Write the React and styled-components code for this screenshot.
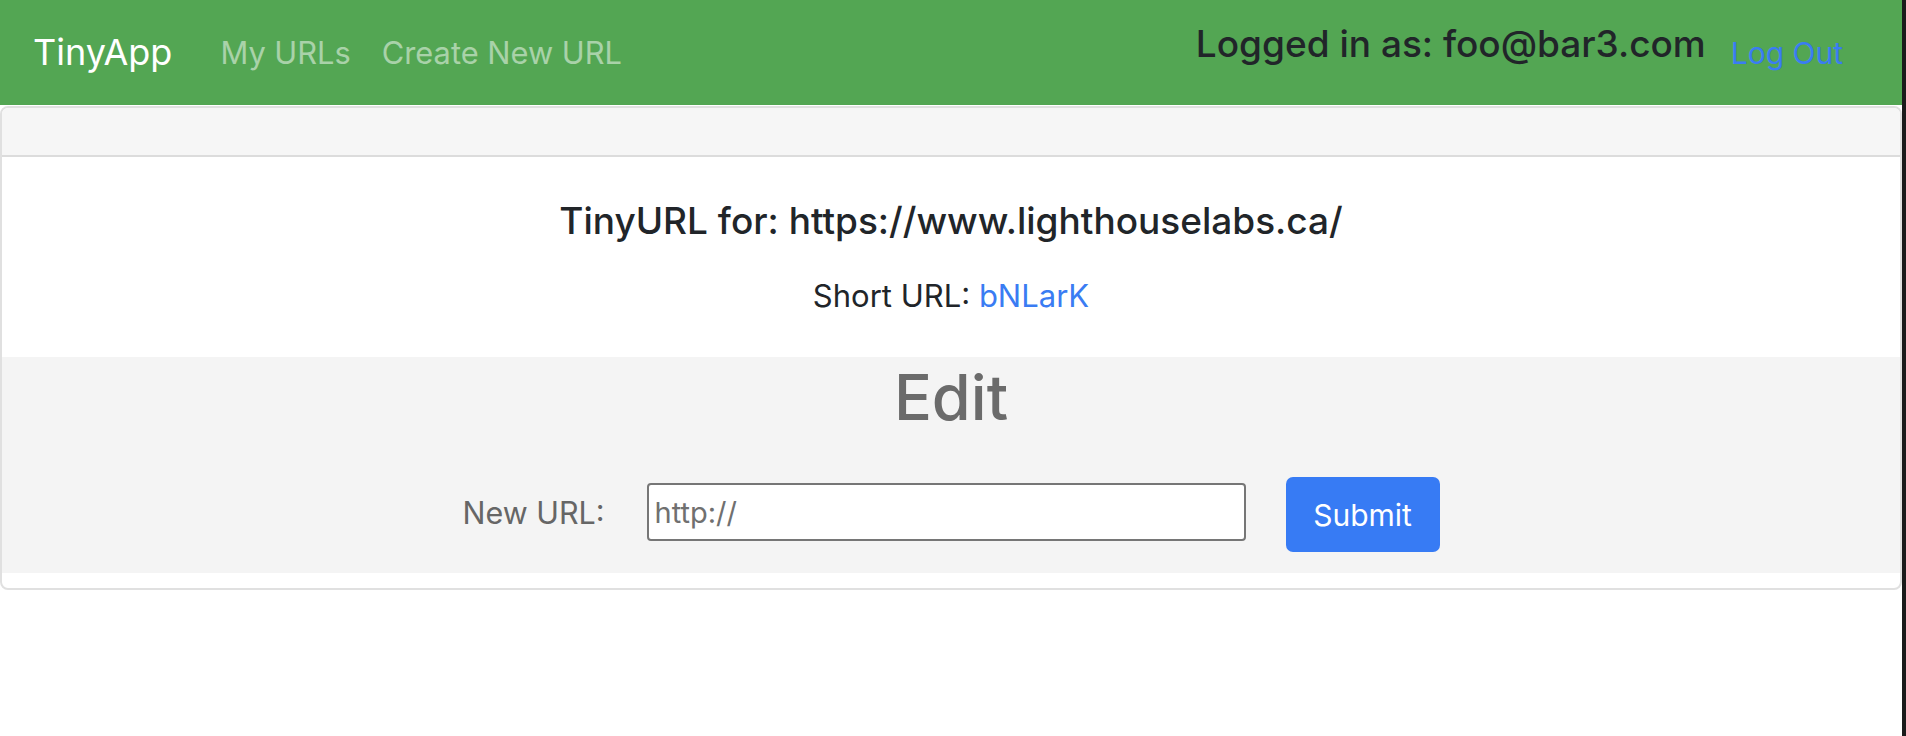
import React from "react";
import styled, { createGlobalStyle } from "styled-components";

const GlobalStyle = createGlobalStyle`
  body {
    margin: 0;
    background: #fff;
    font-family: Inter, "Liberation Sans", sans-serif;
    color: #212529;
  }
`;

const Page = styled.div`
  display: flex;
  min-height: 736px;
`;

const Main = styled.div`
  flex: 1;
  min-width: 0;
`;

const Edge = styled.div`
  width: 4px;
  background: #1b1b1b;
`;

const Nav = styled.nav`
  display: flex;
  align-items: center;
  height: 105px;
  padding: 0 59px 0 33px;
  background: #53a653;
`;

const Brand = styled.a`
  font-size: 36px;
  color: #fff;
  margin-right: 48px;
  margin-top: -2px;
`;

const NavLink = styled.a`
  font-size: 30.8px;
  color: rgba(255, 255, 255, 0.5);
  margin-right: 31px;
`;

const Spacer = styled.div`
  flex: 1;
`;

const Logged = styled.h4`
  margin: 0 25px 16px 0;
  font-size: 37px;
  font-weight: 500;
  line-height: 1.2;
`;

const LogOut = styled.a`
  font-size: 30px;
  color: #3a7cf3;
`;

const Card = styled.div`
  margin-top: 1px;
  border: 2px solid #e0e0e0;
  border-radius: 8px;
  overflow: hidden;
`;

const CardHeader = styled.div`
  height: 47px;
  background: #f6f6f6;
  border-bottom: 2px solid #dcdcdc;
`;

const CardBody = styled.div`
  padding-bottom: 15px;
`;

const Intro = styled.section`
  display: flex;
  flex-direction: column;
  align-items: center;
  padding-top: 42px;
  height: 200px;
  box-sizing: border-box;
`;

const Heading = styled.h3`
  margin: 0 0 35px;
  font-size: 37px;
  font-weight: 500;
  line-height: 44px;
`;

const ShortLine = styled.p`
  margin: 0;
  font-size: 31px;
  line-height: 36px;
`;

const ShortLink = styled.a`
  color: #3a7cf3;
`;

const EditSection = styled.section`
  display: flex;
  flex-direction: column;
  align-items: center;
  background: #f4f4f4;
  padding: 2px 0 21px;
`;

const EditTitle = styled.h1`
  margin: 0 0 37px;
  font-size: 63px;
  font-weight: 500;
  line-height: 76px;
  color: #6b6b6b;
`;

const Form = styled.form`
  display: flex;
  align-items: center;
`;

const Label = styled.label`
  font-size: 30.5px;
  color: #666;
  margin-right: 42px;
`;

const Input = styled.input`
  box-sizing: border-box;
  width: 599px;
  height: 58px;
  margin-right: 40px;
  padding: 0 6px;
  border: 2px solid #767676;
  border-radius: 4px;
  background: #fff;
  font-family: inherit;
  font-size: 29px;
  color: #707070;
  outline: none;

  &::placeholder {
    color: #707070;
  }
`;

const Button = styled.button`
  box-sizing: border-box;
  width: 154px;
  height: 75px;
  border: none;
  border-radius: 7px;
  background: #377bf4;
  color: #fff;
  font-family: inherit;
  font-size: 30px;
  margin-top: 5px;
`;

const App = () => {
  return (
    <Page>
      <GlobalStyle />
      <Main>
        <Nav>
          <Brand>TinyApp</Brand>
          <NavLink>My URLs</NavLink>
          <NavLink>Create New URL</NavLink>
          <Spacer />
          <Logged>Logged in as: foo@bar3.com</Logged>
          <LogOut>Log Out</LogOut>
        </Nav>
        <Card>
          <CardHeader />
          <CardBody>
            <Intro>
              <Heading>TinyURL for: https://www.lighthouselabs.ca/</Heading>
              <ShortLine>
                Short URL: <ShortLink>bNLarK</ShortLink>
              </ShortLine>
            </Intro>
            <EditSection>
              <EditTitle>Edit</EditTitle>
              <Form onSubmit={(e) => e.preventDefault()}>
                <Label>New URL:</Label>
                <Input type="text" placeholder="http://" />
                <Button type="submit">Submit</Button>
              </Form>
            </EditSection>
          </CardBody>
        </Card>
      </Main>
      <Edge />
    </Page>
  );
};

export default App;
